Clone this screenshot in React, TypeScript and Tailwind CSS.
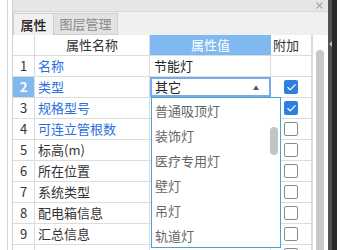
import { Check } from "lucide-react";

type Row = { no: number; name: string; link?: boolean; value?: string; check?: "on" | "off" | "none" };

const rows: Row[] = [
  { no: 1, name: "名称", link: true, value: "节能灯", check: "none" },
  { no: 2, name: "类型", link: true, value: "其它", check: "on" },
  { no: 3, name: "规格型号", link: true, check: "on" },
  { no: 4, name: "可连立管根数", link: true, check: "off" },
  { no: 5, name: "标高(m)", check: "off" },
  { no: 6, name: "所在位置", check: "off" },
  { no: 7, name: "系统类型", check: "off" },
  { no: 8, name: "配电箱信息", check: "off" },
  { no: 9, name: "汇总信息", check: "off" },
  { no: 10, name: "", check: "off" },
];

const options = ["普通吸顶灯", "装饰灯", "医疗专用灯", "壁灯", "吊灯", "轨道灯"];

function Box({ state }: { state?: Row["check"] }) {
  if (state === "none") return null;
  if (state === "on")
    return (
      <div className="w-[14px] h-[14px] rounded-[2px] bg-[#2f7fe0] flex items-center justify-center">
        <Check size={11} strokeWidth={2.5} className="text-white" />
      </div>
    );
  return <div className="w-[14px] h-[14px] rounded-[2px] border border-[#8a8a8a] bg-white" />;
}

export default function App() {
  return (
    <div
      className="w-[337px] h-[250px] overflow-hidden flex bg-white text-[13px] text-[#333]"
      style={{ fontFamily: '"Noto Sans CJK SC", "Noto Sans", sans-serif' }}
    >
      {/* left gutter */}
      <div className="w-[12px] flex">
        <div className="w-[7px]" />
        <div className="w-px bg-[#d4d4d4]" />
      </div>

      {/* panel */}
      <div className="w-[316px] flex flex-col border-l border-[#d0d0d0]">
        <div className="h-[12px] bg-[#e6e6e6] border-b border-[#d6d6d6] flex items-center justify-end pr-[5px]">
          <svg width="7" height="7" viewBox="0 0 7 7">
            <path d="M0.5 0.5L6.5 6.5M6.5 0.5L0.5 6.5" stroke="#a8a8a8" strokeWidth="1.2" />
          </svg>
        </div>
        <div className="h-[23px] bg-[#f0f0f0] flex items-end">
          <div className="w-[41px] h-[22px] border border-[#d0d0d0] border-b-0 bg-[#f0f0f0] flex items-center justify-center text-[#222] font-medium">
            属性
          </div>
          <div className="w-[64px] h-[22px] border border-[#d0d0d0] border-l-0 bg-[#e2e2e2] flex items-center justify-center text-[#8a8a8a]">
            图层管理
          </div>
        </div>

        <div className="flex-1 flex min-h-0">
          {/* table */}
          <div className="relative w-[299px]">
            <div className="flex h-[21px] border-b border-[#dcdcdc]">
              <div className="w-[22px] border-r border-[#dcdcdc]" />
              <div className="w-[115px] border-r border-[#dcdcdc] flex items-center justify-center">属性名称</div>
              <div className="w-[121px] bg-[#80b8f0] text-white flex items-center justify-center">属性值</div>
              <div className="w-[41px] border-r border-[#dcdcdc] flex items-center pl-[2px]">附加</div>
            </div>
            {rows.map((r) => (
              <div key={r.no} className="flex h-[21px] border-b border-[#dcdcdc]">
                <div
                  className={`w-[22px] border-r border-[#dcdcdc] flex items-center justify-center ${
                    r.no === 2 ? "bg-[#80b8f0] text-white font-bold" : ""
                  }`}
                >
                  {r.no < 10 ? r.no : ""}
                </div>
                <div
                  className={`w-[115px] border-r border-[#dcdcdc] flex items-center pl-[3px] ${
                    r.link ? "text-[#2a6fe0]" : "text-[#333]"
                  }`}
                >
                  {r.name}
                </div>
                {r.no === 2 ? (
                  <div className="w-[121px] border-2 border-[#74aee8] flex items-center justify-between pl-[3px] pr-[10px] text-[#222]">
                    <span>其它</span>
                    <span className="text-[6px] text-[#555]">▲</span>
                  </div>
                ) : (
                  <div className="w-[121px] border-r border-[#dcdcdc] flex items-center pl-[4px] text-[#222]">
                    {r.value}
                  </div>
                )}
                <div className="w-[41px] border-r border-[#dcdcdc] flex items-center justify-center">
                  <Box state={r.check} />
                </div>
              </div>
            ))}

            {/* dropdown list */}
            <div className="absolute left-[138px] top-[62px] w-[130px] h-[151px] bg-white border border-[#45a2d6] flex">
              <div className="flex-1 flex flex-col text-[13px] text-[#666]">
                {options.map((o) => (
                  <div key={o} className="h-[25px] flex items-center pl-[3px] shrink-0">
                    {o}
                  </div>
                ))}
              </div>
              <div className="w-[12px] pt-[29px] flex justify-center">
                <div className="w-[8px] h-[28px] rounded-full bg-[#c4c4c4]" />
              </div>
            </div>
          </div>

          {/* scrollbar */}
          <div className="w-[16px] border-l border-[#dcdcdc] bg-white pt-[15px] flex justify-center">
            <div className="w-[8px] h-full rounded-t-full bg-[#c8c8c8] -ml-[1px]" />
          </div>
        </div>
      </div>

      {/* dark edge */}
      <div className="relative w-[9px] flex">
        <div className="w-[4px] bg-[#4e5358]" />
        <div className="flex-1 bg-[#2b2b2b]" />
        <div className="absolute left-[1px] top-[41px] w-0 h-0 border-y-[3px] border-y-transparent border-r-[3px] border-r-[#b8b8b8]" />
      </div>
    </div>
  );
}
